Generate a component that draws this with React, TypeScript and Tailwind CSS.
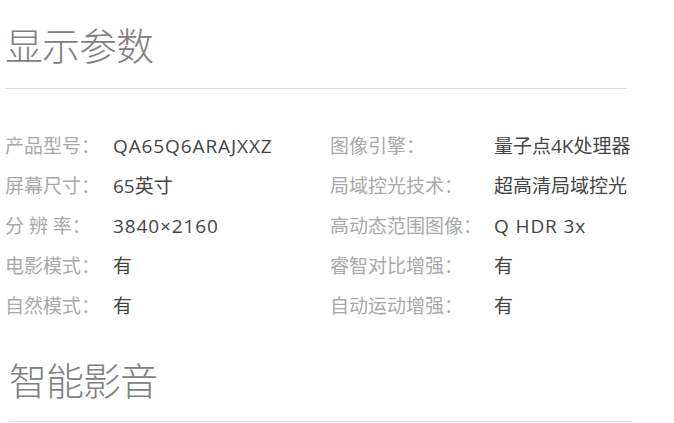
import React from 'react';

// [label, value, value is latin, label, value, value is latin]
const specs: [string, string, boolean, string, string, boolean][] = [
  ['产品型号：', 'QA65Q6ARAJXXZ', true, '图像引擎：', '量子点4K处理器', false],
  ['屏幕尺寸：', '65英寸', false, '局域控光技术：', '超高清局域控光', false],
  ['分 辨 率：', '3840×2160', true, '高动态范围图像：', 'Q HDR 3x', true],
  ['电影模式：', '有', false, '睿智对比增强：', '有', false],
  ['自然模式：', '有', false, '自动运动增强：', '有', false],
];

const font = { fontFamily: '"Open Sans", "Noto Sans CJK SC", sans-serif' };

export default function App() {
  return (
    <div className="w-[674px] h-[423px] bg-white overflow-hidden" style={font}>
      {/* 显示参数 */}
      <div className="pl-[5px] w-[627px]">
        <h2 className="mt-[26px] text-[38px] leading-[38px] font-light text-[#808080] tracking-[-1px]">
          显示参数
        </h2>
        <div className="mt-[24px] h-px bg-[#dcdcdc]" />

        <div className="mt-[37px]">
          {specs.map((row) => (
            <div key={row[0]} className="flex h-[40px] items-center text-[19px] whitespace-nowrap">
              <span className="w-[108px] shrink-0 text-[#a8a8a8]">{row[0]}</span>
              <span
                className={row[2] ? 'w-[217px] shrink-0 text-[#444] tracking-[0.9px]' : 'w-[217px] shrink-0 text-[#444]'}
              >
                {row[1]}
              </span>
              <span className="w-[164px] shrink-0 text-[#a8a8a8]">{row[3]}</span>
              <span className={row[5] ? 'text-[#444] tracking-[0.9px]' : 'text-[#444]'}>{row[4]}</span>
            </div>
          ))}
        </div>
      </div>

      {/* 智能影音 */}
      <div className="pl-[9px] w-[632px]">
        <h2 className="mt-[35px] text-[38px] leading-[38px] font-light text-[#808080] tracking-[-1px]">
          智能影音
        </h2>
        <div className="mt-[22px] h-px bg-[#dcdcdc]" />
      </div>
    </div>
  );
}
